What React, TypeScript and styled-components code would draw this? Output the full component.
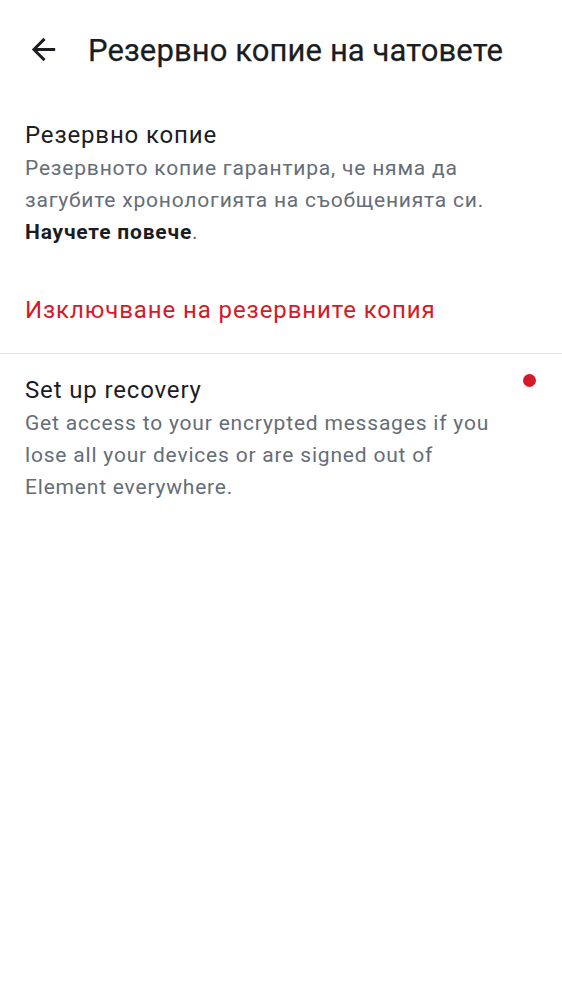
import React from "react";
import styled, { createGlobalStyle } from "styled-components";

const Global = createGlobalStyle`
  html, body { margin: 0; padding: 0; background: #ffffff; }
  body { font-family: Roboto, "Noto Sans", sans-serif; -webkit-font-smoothing: antialiased; }
`;

const Page = styled.div`
  width: 562px;
  min-height: 1000px;
  background: #ffffff;
  display: flex;
  flex-direction: column;
`;

const TopBar = styled.header`
  height: 100px;
  display: flex;
  align-items: center;
  padding-left: 26px;
  gap: 27px;
`;

const BackButton = styled.button`
  width: 35px;
  height: 35px;
  padding: 0;
  border: none;
  background: none;
  display: flex;
  align-items: center;
  justify-content: center;
  color: #1b1d22;
  margin-top: -2px;
`;

const Title = styled.h1`
  margin: 0;
  font-size: 31px;
  font-weight: 400;
  color: #1b1d22;
  letter-spacing: 0.1px;
  -webkit-text-stroke: 0.25px #1b1d22;
`;

const Section = styled.section<{ $divided?: boolean }>`
  display: flex;
  flex-direction: column;
  border-top: ${(p) => (p.$divided ? "1px solid #e3e5e8" : "none")};
`;

const Item = styled.div<{ $pt: number; $pb: number }>`
  position: relative;
  padding: ${(p) => p.$pt}px 56px ${(p) => p.$pb}px 25px;
  display: flex;
  flex-direction: column;
`;

const ItemTitle = styled.div<{ $danger?: boolean }>`
  font-size: 24px;
  line-height: 32px;
  letter-spacing: ${(p) => (p.$danger ? "0.9px" : "0.85px")};
  color: ${(p) => (p.$danger ? "#d51928" : "#1b1d22")};
`;

const ItemText = styled.div`
  font-size: 21px;
  line-height: 32px;
  letter-spacing: 0.8px;
  color: #656d77;
  margin-top: 1px;
`;

const Strong = styled.strong`
  font-weight: 700;
  letter-spacing: 0.8px;
  color: #1b1d22;
`;

const Dot = styled.span`
  position: absolute;
  top: 20px;
  right: 26px;
  width: 13px;
  height: 13px;
  border-radius: 50%;
  background: #d51928;
`;

export default function App() {
  return (
    <Page>
      <Global />
      <TopBar>
        <BackButton aria-label="Назад">
          <svg width="35" height="35" viewBox="0 0 24 24" fill="currentColor">
            <path d="M20 11H7.83l5.59-5.59L12 4l-8 8 8 8 1.41-1.41L7.83 13H20v-2z" />
          </svg>
        </BackButton>
        <Title>Резервно копие на чатовете</Title>
      </TopBar>
      <Section>
        <Item $pt={19} $pb={24}>
          <ItemTitle>Резервно копие</ItemTitle>
          <ItemText>
            Резервното копие гарантира, че няма да загубите хронологията на съобщенията си.{" "}
            <Strong>Научете повече</Strong>.
          </ItemText>
        </Item>
        <Item $pt={22} $pb={27}>
          <ItemTitle $danger>Изключване на резервните копия</ItemTitle>
        </Item>
      </Section>
      <Section $divided>
        <Item $pt={20} $pb={20}>
          <ItemTitle>Set up recovery</ItemTitle>
          <ItemText>
            Get access to your encrypted messages if you lose all your devices or are signed out of
            Element everywhere.
          </ItemText>
          <Dot />
        </Item>
      </Section>
    </Page>
  );
}
